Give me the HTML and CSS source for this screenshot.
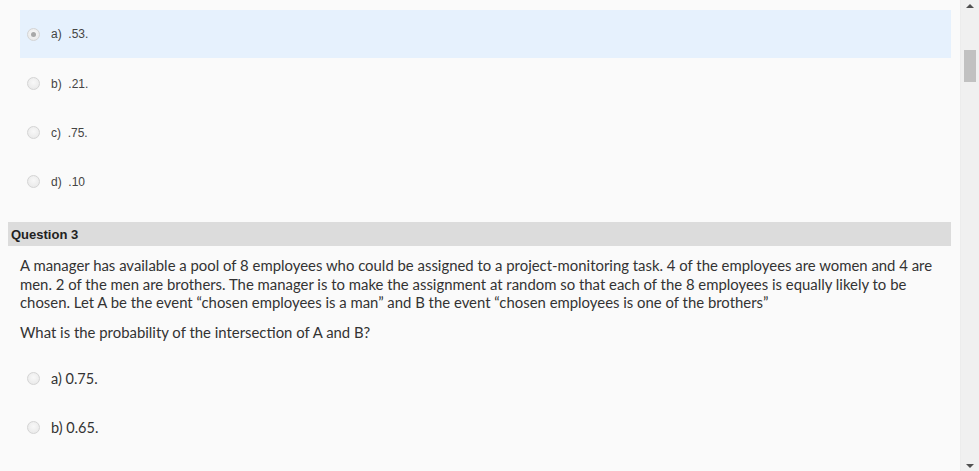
FILE: index.html
```html
<!DOCTYPE html>
<html>
<head>
<meta charset="utf-8">
<link rel="stylesheet" href="styles.css">
</head>
<body>
<div class="page">
  <div class="content">
    <div class="options">
      <div class="option selected"><span class="radio checked"></span><span class="label">a)&nbsp; .53.</span></div>
      <div class="option"><span class="radio"></span><span class="label">b)&nbsp; .21.</span></div>
      <div class="option"><span class="radio"></span><span class="label">c)&nbsp; .75.</span></div>
      <div class="option"><span class="radio"></span><span class="label">d)&nbsp; .10</span></div>
    </div>
    <div class="qhead">Question 3</div>
    <div class="qbody">
      <p class="para">A manager has available a pool of 8 employees who could be assigned to a project-monitoring task. 4 of the employees are women and 4 are<br>men. 2 of the men are brothers. The manager is to make the assignment at random so that each of the 8 employees is equally likely to be<br>chosen. Let A be the event “chosen employees is a man” and B the event “chosen employees is one of the brothers”</p>
      <p class="para ask">What is the probability of the intersection of A and B?</p>
    </div>
    <div class="options q3">
      <div class="option"><span class="radio"></span><span class="label alt">a) 0.75.</span></div>
      <div class="option"><span class="radio"></span><span class="label alt">b) 0.65.</span></div>
    </div>
  </div>
  <div class="scrollbar">
    <div class="arrow up"></div>
    <div class="track"><div class="thumb"></div></div>
    <div class="arrow down"></div>
  </div>
</div>
</body>
</html>
```

FILE: styles.css
```css
html, body {
  margin: 0;
  padding: 0;
  height: 100%;
  overflow: hidden;
}
body {
  background: #fafafa;
  font-family: "Liberation Sans", Arial, sans-serif;
  color: #333;
}
.page {
  display: flex;
  height: 471px;
}
.content {
  flex: 1;
  padding-top: 10px;
  min-width: 0;
}
.options {
  margin: 0 9px 0 20px;
}
.option {
  height: 49px;
  display: flex;
  align-items: center;
  padding-left: 7px;
}
.option.selected {
  background: #e6f1fd;
  height: 48px;
  margin-bottom: 1px;
}
.radio {
  width: 11px;
  height: 11px;
  border-radius: 50%;
  border: 1px solid #d4d4d4;
  background: radial-gradient(circle at 50% 40%, #f8f8f8, #e6e6e6);
  box-sizing: content-box;
  display: flex;
  align-items: center;
  justify-content: center;
  flex: none;
}
.radio.checked::after {
  content: "";
  width: 5px;
  height: 5px;
  border-radius: 50%;
  background: #a8a8a8;
}
.label {
  margin-left: 11px;
  font-size: 12px;
  color: #444;
}
.label.alt {
  font-family: Lato, "Open Sans", sans-serif;
  font-size: 14.5px;
  color: #333;
}
.qhead {
  margin: 16px 9px 0 8px;
  height: 24px;
  background: #dcdcdc;
  font-weight: bold;
  font-size: 13px;
  color: #222;
  padding-left: 3px;
  display: flex;
  align-items: center;
}
.qbody {
  padding: 10px 9px 0 20px;
}
.para {
  margin: 0;
  font-family: Lato, "Open Sans", sans-serif;
  font-size: 14.9px;
  line-height: 18.5px;
  color: #333;
  white-space: nowrap;
}
.para.ask {
  margin-top: 11px;
}
.options.q3 {
  margin-top: 13px;
}
.scrollbar {
  width: 18px;
  background: #f0f0f0;
  display: flex;
  flex-direction: column;
  border-left: 1px solid #ececec;
}
.arrow {
  height: 17px;
  display: flex;
  align-items: center;
  justify-content: center;
}
.arrow::after {
  content: "";
  border-left: 4px solid transparent;
  border-right: 4px solid transparent;
}
.arrow.up::after {
  border-bottom: 4px solid #505050;
  margin-top: -6px;
}
.arrow.down::after {
  border-top: 4px solid #505050;
  margin-top: 6px;
}
.track {
  flex: 1;
  padding-top: 33px;
}
.thumb {
  width: 12px;
  height: 32px;
  margin-left: 3px;
  background: #c1c1c1;
}
```
